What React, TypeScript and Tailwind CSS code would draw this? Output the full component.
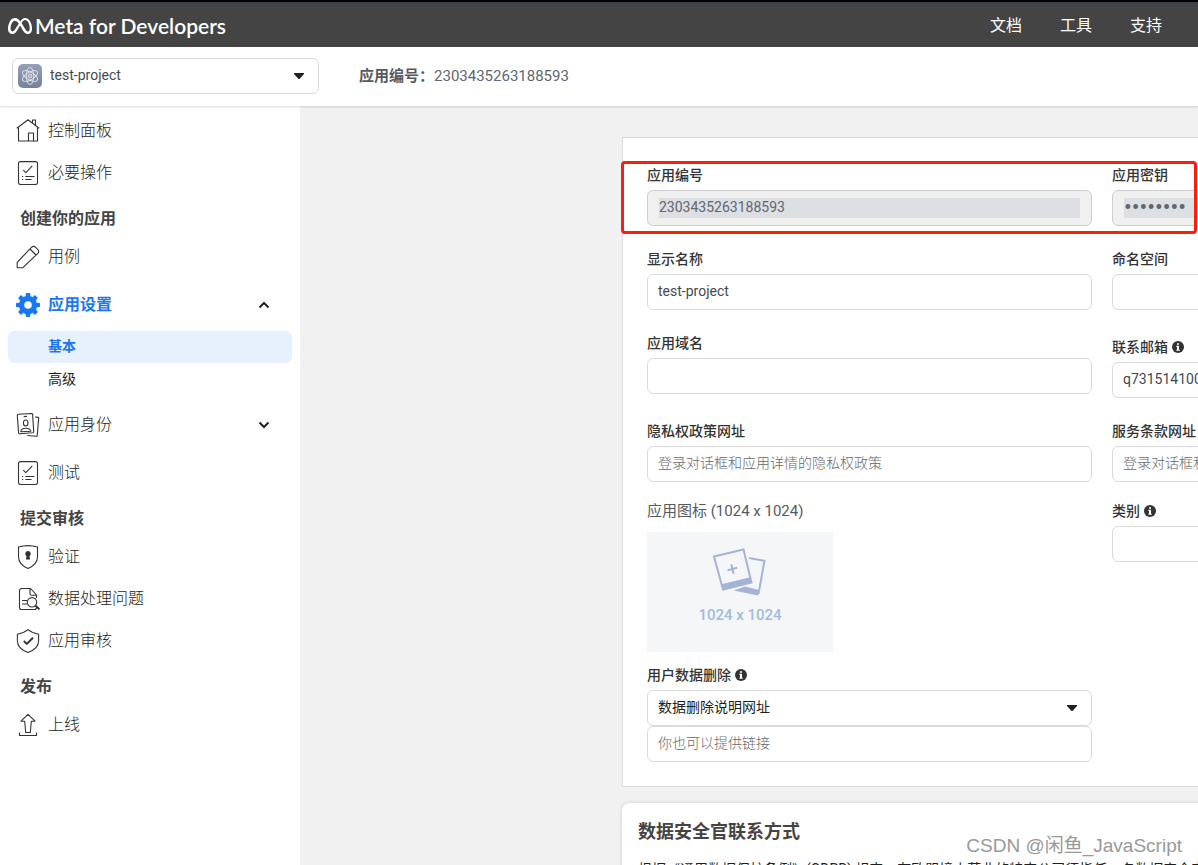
import { useState } from "react";
import type { ReactNode } from "react";
import { SiMeta } from "react-icons/si";

const FONT = "font-[Roboto,'Noto_Sans_CJK_SC',sans-serif]";

/* ── Icons ── */

function LineIcon({ children }: { children: ReactNode }) {
  return (
    <svg
      viewBox="0 0 24 24"
      className="w-6 h-6 shrink-0"
      fill="none"
      stroke="#333"
      strokeWidth="1.1"
      strokeLinejoin="round"
      aria-hidden="true"
    >
      {children}
    </svg>
  );
}

const HomeIcon = () => (
  <LineIcon>
    <path d="M.8 9.2 12 .8l11.2 8.4M2.5 8v14h19V8M12.5 22v-8h5v8M16.5 4V1h3v5.2" />
  </LineIcon>
);

const ChecklistIcon = () => (
  <LineIcon>
    <rect x="2.5" y=".6" width="19" height="22.9" rx="2" />
    <path d="m7.3 9.2 2.5 2.5 6.5-6.8M9.3 15.5h9.2M9.3 18.5h6.2M6 15.5h1.2M6 18.5h1.2" />
  </LineIcon>
);

const PencilIcon = () => (
  <LineIcon>
    <path d="M1.2 22.7v-5.4L15.7 2.1a2.6 2.6 0 0 1 3.7 0l2.5 2.5a2.6 2.6 0 0 1 0 3.7L6.9 22.7ZM14 4l6 6" />
  </LineIcon>
);

const GearIcon = () => (
  <svg viewBox="0 0 24 24" className="w-6 h-6 shrink-0" aria-hidden="true">
    <circle cx="12" cy="12" r="6.5" fill="none" stroke="#1877f2" strokeWidth="5.4" />
    {[0, 45, 90, 135, 180, 225, 270, 315].map((a) => (
      <rect key={a} x="9.7" y="0" width="4.6" height="4.5" rx="1.3" fill="#1877f2" transform={`rotate(${a} 12 12)`} />
    ))}
  </svg>
);

const IdentityIcon = () => (
  <LineIcon>
    <path d="M2.3 1.3 15.6.5a1 1 0 0 1 1 .9l1.1 17.4a1 1 0 0 1-.9 1L3.6 20.8a1 1 0 0 1-1-.9L1.3 2.3a1 1 0 0 1 1-1ZM7.7 3.6l3.2-.2M19 4l3.2.4a.6.6 0 0 1 .5.7l-1.5 17.7a.6.6 0 0 1-.6.5l-9.4-.8" />
    <ellipse cx="9.7" cy="10" rx="2.3" ry="3" />
    <path d="M4.8 18.8c.2-2.4 2.6-3.5 4.9-3.5s4.6.9 5.2 3Z" />
  </LineIcon>
);

const ShieldLockIcon = () => (
  <LineIcon>
    <path d="M2.5 2.1Q12-.9 21.5 2.1v9.6c0 5-4.3 9.5-9.5 11.8-5.2-2.3-9.5-6.8-9.5-11.8Z" />
    <path d="M12 6a2.9 2.9 0 0 0-1.5 5.3l-.6 3.3h4.2l-.6-3.3A2.9 2.9 0 0 0 12 6Z" fill="#333" stroke="none" />
  </LineIcon>
);

const DataIcon = () => (
  <LineIcon>
    <path d="M20.5 11V8l-6-6.5h-9a2 2 0 0 0-2 2v17a2 2 0 0 0 2 2h13a2 2 0 0 0 2-2V20M14 1.7v5a1.5 1.5 0 0 0 1.5 1.5h5M6 13.5h5M6 17h5" />
    <circle cx="16" cy="15.3" r="4.7" />
    <path d="m19.6 18.7 3.8 3.6" strokeWidth="2" />
  </LineIcon>
);

const ShieldCheckIcon = () => (
  <LineIcon>
    <path d="M12 .6c3 2.5 6.4 4 10.6 4.6v6.6c0 5.6-4.4 9.6-10.6 11.7C5.8 21.4 1.4 17.4 1.4 11.8V5.2C5.6 4.6 9 3.1 12 .6Z" />
    <path d="m7.8 12 3 2.9 6.2-6.2" strokeWidth="2" />
  </LineIcon>
);

const UploadIcon = () => (
  <LineIcon>
    <path d="m12 1.3 7 6.9h-3.7l-1 11.3H9.7L8.7 8.2H5ZM3.5 19.5v3h17v-3" />
  </LineIcon>
);

const InfoIcon = () => (
  <svg viewBox="0 0 12 12" className="w-3 h-3 shrink-0" aria-hidden="true">
    <circle cx="6" cy="6" r="6" fill="#333" />
    <path d="M5 2.2h2v1.5H5zM4.3 4.8H7v3.9h.8v1.1H4.3V8.7H5V5.9h-.7Z" fill="#fff" />
  </svg>
);

const Caret = () => (
  <svg viewBox="0 0 12 6" className="w-3 h-1.5 shrink-0 pointer-events-none" aria-hidden="true">
    <path d="M1 0h10v1L6.5 6h-1L1 1Z" fill="#222" />
  </svg>
);

const Chevron = ({ up }: { up?: boolean }) => (
  <svg viewBox="0 0 12 8" className="w-3 h-2 shrink-0" fill="none" stroke="#222" strokeWidth="2" aria-hidden="true">
    <path d={up ? "m1.5 6.5 4.5-4.5 4.5 4.5" : "m1.5 1.5 4.5 4.5 4.5-4.5"} />
  </svg>
);

const AppIcon = () => (
  <svg viewBox="0 0 24 24" className="w-6 h-6 shrink-0" fill="none" stroke="#e4e7ee" strokeWidth=".9" aria-hidden="true">
    <defs>
      <linearGradient id="app-bg" x1="0" y1="0" x2="0" y2="1">
        <stop offset="0" stopColor="#94a0b8" />
        <stop offset="1" stopColor="#788299" />
      </linearGradient>
    </defs>
    <rect width="24" height="24" rx="5" fill="url(#app-bg)" stroke="none" />
    {[0, 60, 120].map((a) => (
      <ellipse key={a} cx="12" cy="12" rx="3.8" ry="8.5" transform={`rotate(${a} 12 12)`} />
    ))}
    <circle cx="12" cy="12" r="2" fill="#a9b2c5" />
  </svg>
);

const PhotosIcon = () => (
  <svg viewBox="0 0 54 48" className="w-[54px] h-12" fill="none" stroke="#a5b4d6" strokeWidth="2" aria-hidden="true">
    <path d="M36 10 51.5 12.8 45.5 46" />
    <path d="M20.5 42.5 32 38.5l14 3.500-.8 5.500Z" fill="#a5b4d6" stroke="none" />
    <path d="M1 8.500 30.500 1.500l8 33-28.500 7Z" fill="#f5f6f7" />
    <path d="m8.300 36.200 29-7 1.800 5.800-29.800 7.500Z" fill="#a5b4d6" stroke="none" />
    <path d="m14.600 22.200 9.600-2.400M18.200 16.200l2.400 9.600" />
  </svg>
);

/* ── Sidebar ── */

function NavItem({ icon, label, tall }: { icon: ReactNode; label: string; tall?: boolean }) {
  return (
    <a href="#" className={`flex items-center gap-2 px-4 ${tall ? "h-12" : "h-[42px]"}`}>
      {icon}
      <span>{label}</span>
    </a>
  );
}

function NavHeading({ children }: { children: string }) {
  return <h2 className="flex items-center h-[42px] pt-2 px-5 font-bold text-[#444]">{children}</h2>;
}

function Sidebar() {
  return (
    <nav className="w-[300px] shrink-0 bg-white text-base font-light text-[#1c1e21] pt-1">
      <NavItem icon={<HomeIcon />} label="控制面板" />
      <NavItem icon={<ChecklistIcon />} label="必要操作" />
      <NavHeading>创建你的应用</NavHeading>
      <NavItem icon={<PencilIcon />} label="用例" />

      <button type="button" className="flex items-center gap-2 w-full h-12 mt-[3px] pl-4 pr-[30px] font-bold text-[#1877f2]">
        <GearIcon />
        <span className="flex-1 text-left">应用设置</span>
        <Chevron up />
      </button>
      <ul className="text-sm mt-0.5 mb-1.5 px-2">
        <li>
          <a href="#" className="flex items-center h-8 pb-0.5 pl-10 rounded-md bg-[#e7f1fd] text-[#1877f2] font-bold">
            基本
          </a>
        </li>
        <li>
          <a href="#" className="flex items-center h-8 pl-10 font-normal">高级</a>
        </li>
      </ul>

      <button type="button" className="flex items-center gap-2 w-full h-12 pl-4 pr-[30px]">
        <IdentityIcon />
        <span className="flex-1 text-left">应用身份</span>
        <Chevron />
      </button>
      <NavItem icon={<ChecklistIcon />} label="测试" tall />
      <h2 className="flex items-center h-[39px] pt-1 px-5 font-bold text-[#444]">提交审核</h2>
      <NavItem icon={<ShieldLockIcon />} label="验证" />
      <NavItem icon={<DataIcon />} label="数据处理问题" />
      <NavItem icon={<ShieldCheckIcon />} label="应用审核" />
      <NavHeading>发布</NavHeading>
      <NavItem icon={<UploadIcon />} label="上线" />
    </nav>
  );
}

/* ── Form ── */

interface FieldProps {
  id: string;
  label: string;
  value?: string;
  placeholder?: string;
  info?: boolean;
  top?: string;
}

const INPUT =
  "block w-full h-9 px-2.5 pb-0.5 border border-[#d8dade] rounded-md bg-white text-sm text-[#444950] placeholder:font-light placeholder:text-[#65686c] outline-none";

function FieldLabel({ id, label, info, top = "pt-1" }: FieldProps) {
  return (
    <label htmlFor={id} className={`flex items-center gap-1 pb-1.5 text-sm leading-[18px] font-medium text-[#333] ${top}`}>
      {label}
      {info && <InfoIcon />}
    </label>
  );
}

function Field(props: FieldProps) {
  return (
    <div>
      <FieldLabel {...props} />
      <input id={props.id} type="text" defaultValue={props.value} placeholder={props.placeholder} className={INPUT} />
    </div>
  );
}

function LockedField({ type, ...props }: FieldProps & { type: string }) {
  return (
    <div>
      <FieldLabel {...props} />
      <div className="h-9 px-[11px] py-[7px] border border-[#ccced2] rounded-md bg-[#f0f0f0]">
        <input
          id={props.id}
          type={type}
          readOnly
          value={props.value}
          className={`block w-full h-5 bg-[#dddfe3] text-[#606770] outline-none ${
            type === "password" ? "text-[23px]" : "pb-0.5 text-sm"
          }`}
        />
      </div>
    </div>
  );
}

function BasicSettings() {
  const [deletion, setDeletion] = useState("url");

  return (
    <section className="relative w-[960px] p-6 border border-[#dadde1] bg-white">
      <div className="grid grid-cols-2 gap-5">
        <LockedField id="app-id" label="应用编号" type="text" value="2303435263188593" />
        <LockedField id="app-secret" label="应用密钥" type="password" value="12345678" />
        <Field id="display-name" label="显示名称" value="test-project" />
        <Field id="namespace" label="命名空间" />
        <Field id="domains" label="应用域名" />
        <Field id="email" label="联系邮箱" value="q731514100" info top="pt-2" />
        <Field id="privacy" label="隐私权政策网址" placeholder="登录对话框和应用详情的隐私权政策" />
        <Field id="terms" label="服务条款网址" placeholder="登录对话框和应用详情的服务条款" />

        <div>
          <p className="text-[15px] leading-[18px] pb-3 text-[#555a62]">应用图标 (1024 x 1024)</p>
          <button
            type="button"
            className="flex flex-col items-center w-[186px] h-[120px] pt-4 gap-[9px] bg-[#f5f6f7] text-[15px] leading-5 font-medium text-[#a3bbdf]"
          >
            <PhotosIcon />
            1024 x 1024
          </button>

          <div className="pt-2.5">
            <FieldLabel id="deletion" label="用户数据删除" info />
            <div className="flex items-center h-9 pr-[13px] border border-[#d8dade] rounded-md">
              <select
                id="deletion"
                value={deletion}
                onChange={(e) => setDeletion(e.target.value)}
                className="flex-1 h-full pl-2.5 pb-0.5 appearance-none bg-transparent text-sm text-[#1c1e21] outline-none"
              >
                <option value="url">数据删除说明网址</option>
                <option value="callback">数据删除回调网址</option>
              </select>
              <Caret />
            </div>
            <input type="text" aria-label="链接" placeholder="你也可以提供链接" className={INPUT} />
          </div>
        </div>

        <Field id="category" label="类别" info top="pt-0" />
      </div>

      {/* Highlight over the ID and secret */}
      <div className="absolute -left-0.5 top-[23px] w-[576px] h-[73px] border-3 border-[#fb1d10] rounded-sm pointer-events-none" />
    </section>
  );
}

export default function App() {
  const [project, setProject] = useState("test-project");

  return (
    <div className={`relative h-screen flex flex-col overflow-hidden bg-[#f1f1f1] ${FONT}`}>
      <div className="h-[3px] shrink-0 bg-black border-b border-[#36404a]" />

      <header className="flex items-center justify-between h-11 shrink-0 pl-2 pr-9 bg-[#444] text-white">
        <a href="#" className="flex items-center gap-[3px] pt-0.5 font-[Lato,sans-serif] text-[21px] font-semibold">
          <SiMeta className="w-6 h-6" />
          Meta for Developers
        </a>
        <nav className="flex gap-[38px] pt-0.5 text-base">
          <a href="#">文档</a>
          <a href="#">工具</a>
          <a href="#">支持</a>
        </nav>
      </header>

      <div className="relative flex items-center h-[59px] shrink-0 px-3 pb-0.5 bg-white shadow-[0_1px_2px_rgba(0,0,0,0.15)]">
        <div className="flex items-center w-[307px] h-9 pl-[5px] pr-[13px] border border-[#d8dade] rounded-md">
          <AppIcon />
          <select
            aria-label="应用"
            value={project}
            onChange={(e) => setProject(e.target.value)}
            className="flex-1 h-full pl-2 pb-0.5 appearance-none bg-transparent text-sm text-[#444950] outline-none"
          >
            <option>test-project</option>
          </select>
          <Caret />
        </div>
        <p className="pl-10 pt-0.5 text-[15px] text-[#606770]">
          <span className="font-bold text-[#555a62]">应用编号：</span>
          2303435263188593
        </p>
      </div>

      <div className="flex flex-1 min-h-0">
        <Sidebar />
        <main className="flex-1 min-w-0 pl-[322px] pt-[31px] overflow-hidden">
          <BasicSettings />
          <section className="w-[960px] mt-4 p-4 rounded-lg bg-white shadow-[0_0_4px_rgba(0,0,0,0.15)]">
            <h2 className="text-lg leading-[26px] font-bold text-[#444]">数据安全官联系方式</h2>
            <p className="mt-3 text-sm leading-6 text-[#1c1e21]">
              根据《通用数据保护条例》(GDPR) 规定，在欧盟境内营业的特定公司须指任一名数据安全官，用户可以联系该安全官。
            </p>
          </section>
        </main>
      </div>

      <p className="absolute right-4 bottom-[3px] font-['Liberation_Sans','Noto_Sans_CJK_SC',sans-serif] text-[19px] leading-8 text-[#999] pointer-events-none">
        CSDN @闲鱼_JavaScript
      </p>
    </div>
  );
}
